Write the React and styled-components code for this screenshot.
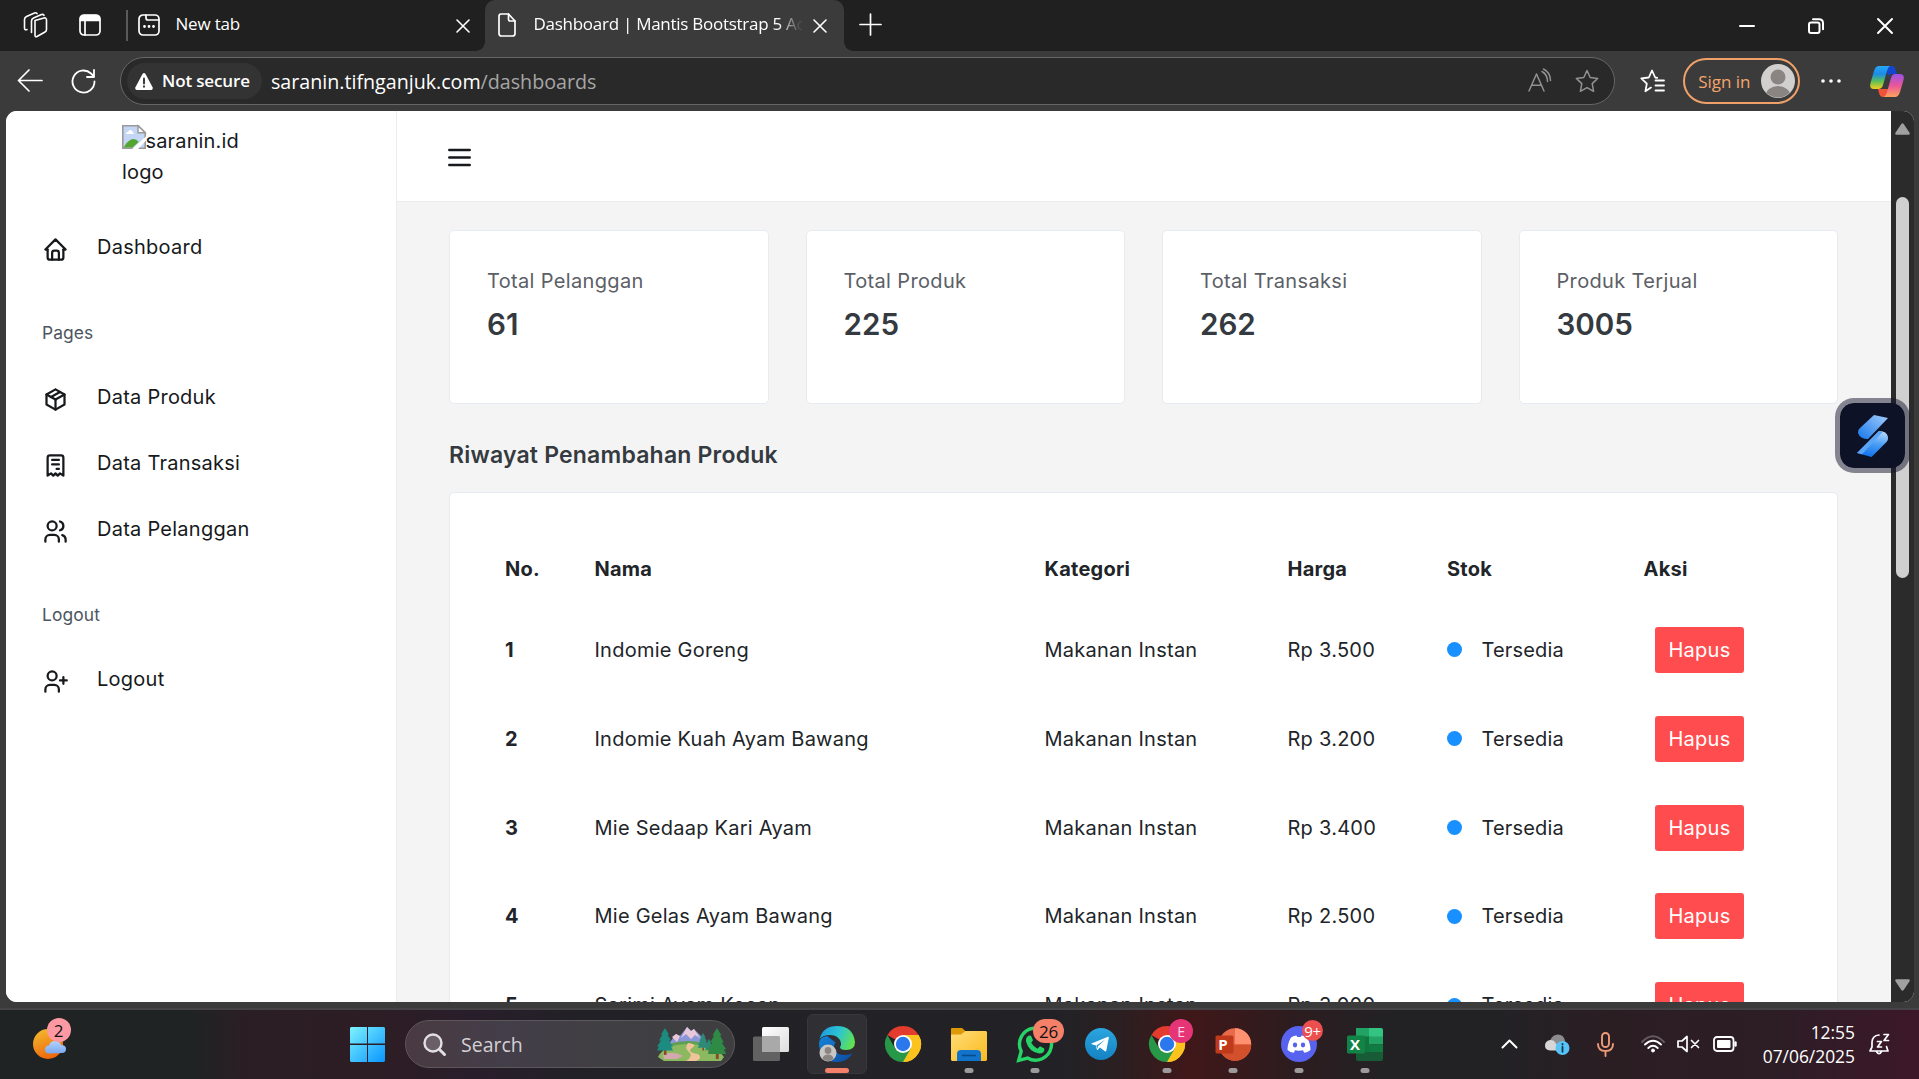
import React from "react";
import styled, { createGlobalStyle, css } from "styled-components";

const GlobalStyle = createGlobalStyle`
  *, *::before, *::after { box-sizing: border-box; }
  html, body { margin: 0; padding: 0; background: #3b3b3b; overflow: hidden; }
  svg { display: block; flex: none; overflow: visible; }
`;

const uiFont = css`
  font-family: "Open Sans", "Noto Sans", sans-serif;
`;

/* ---------- window ---------- */
const Desktop = styled.div`
  width: 1919px;
  height: 1079px;
  display: flex;
  flex-direction: column;
  overflow: hidden;
`;

const TabStrip = styled.header`
  ${uiFont}
  height: 51px;
  flex: none;
  display: flex;
  align-items: center;
  padding-left: 23px;
  background: #202020;
  color: #fff;
  font-size: 17px;
  letter-spacing: -0.2px;
`;

const StripIcon = styled.span`
  display: flex;
  width: ${(p) => p.$w}px;
  margin-right: ${(p) => p.$gap || 0}px;
  padding-bottom: 2px;
`;

const StripDivider = styled.i`
  width: 1.5px;
  height: 31px;
  background: #5a5a5a;
  margin-right: 10px;
`;

const TabLabel = styled.span`
  white-space: nowrap;
  overflow: hidden;
  line-height: 26px;
  padding-bottom: 3px;
  ${(p) => p.$fade && "mask-image: linear-gradient(90deg, #000 244px, rgba(0,0,0,.1) 265px); letter-spacing: -0.27px;"}
  width: ${(p) => p.$w}px;
`;

const InactiveTab = styled.div`
  display: flex;
  align-items: center;
  width: 347px;
`;

const ActiveTab = styled.div`
  position: relative;
  display: flex;
  align-items: center;
  align-self: stretch;
  width: 359px;
  padding-left: 13px;
  background: #3b3b3b;
  border-radius: 10px 10px 0 0;
  margin-right: 16px;
  &::before,
  &::after {
    content: "";
    position: absolute;
    bottom: 0;
    width: 9px;
    height: 9px;
  }
  &::before {
    left: -9px;
    background: radial-gradient(circle at 0 0, transparent 8.5px, #3b3b3b 9px);
  }
  &::after {
    right: -9px;
    background: radial-gradient(circle at 100% 0, transparent 8.5px, #3b3b3b 9px);
  }
`;

const TabClose = styled.span`
  display: flex;
  margin-left: 11px;
`;

const WindowButtons = styled.div`
  display: flex;
  margin-left: auto;
`;

const WindowButton = styled.span`
  width: 69px;
  display: flex;
  justify-content: center;
`;

const AddressRow = styled.div`
  ${uiFont}
  height: 60px;
  flex: none;
  display: flex;
  align-items: center;
  background: #3b3b3b;
  padding: 0 15px 0 17px;
  color: #fff;
`;

const NavIcon = styled.span`
  display: flex;
  margin-right: ${(p) => p.$gap}px;
`;

const AddressBar = styled.div`
  display: flex;
  align-items: center;
  width: 1497px;
  height: 48px;
  border: 1.5px solid #666;
  border-radius: 24px;
  background: #292929;
  padding: 0 15px 0 6px;
  margin-right: 25px;
`;

const SecurityChip = styled.span`
  display: flex;
  align-items: center;
  gap: 9px;
  width: 135px;
  height: 36px;
  padding-left: 8px;
  border-radius: 18px;
  background: #333;
  font-size: 17px;
  font-weight: 600;
  letter-spacing: -0.15px;
  white-space: nowrap;
  span { padding-bottom: 1px; }
`;

const Url = styled.span`
  font-size: 19.7px;
  letter-spacing: -0.02px;
  line-height: 28px;
  margin-left: 9px;
  padding-top: 1px;
  flex: 1;
  em {
    font-style: normal;
    color: #a6a6a6;
  }
`;

const SignIn = styled.span`
  display: flex;
  align-items: center;
  justify-content: space-between;
  width: 117px;
  height: 46px;
  border: 2px solid #f0a069;
  border-radius: 23px;
  color: #f5a56c;
  font-size: 17px;
  padding: 0 3px 0 13px;
  margin: 0 21px 0 18px;
`;

const Viewport = styled.div`
  flex: none;
  height: 899px;
  padding: 0 5px 8px 6px;
  background: #3b3b3b;
  border-bottom: 2px solid #454345;
  display: flex;
`;

const PageFrame = styled.div`
  position: relative;
  display: flex;
  height: 891px;
  flex: 1;
  border-radius: 11px;
  overflow: hidden;
  background: #fff;
`;

const ScrollTrack = styled.div`
  width: 23px;
  background: #2b2b2b;
  display: flex;
  flex-direction: column;
  align-items: center;
  padding: 12px 0 11px 0;
`;

const ScrollThumb = styled.i`
  width: 13.5px;
  height: 381px;
  border-radius: 7px;
  background: #d0d0d0;
  margin: 62px 0 auto;
`;

/* ---------- web page ---------- */
const Page = styled.div`
  flex: 1;
  display: flex;
  font-family: Inter, "Open Sans", sans-serif;
  font-size: 20px;
  letter-spacing: 0.25px;
  line-height: 30px;
  color: #17191c;
`;

const Sidebar = styled.nav`
  width: 391px;
  border-right: 1px solid #ececec;
  background: #fff;
`;

const Brand = styled.div`
  height: 105.5px;
  padding: 14px 0 0 116px;
  line-height: 31px;
  letter-spacing: 0.15px;
  div { display: flex; }
  span { padding-top: 1px; }
  svg { margin-right: -0.5px; }
`;

const SideItem = styled.a`
  display: flex;
  align-items: center;
  height: 66px;
  padding-left: 36px;
  span {
    margin-left: 28px;
    padding-bottom: 5px;
  }
`;

const SideCaption = styled.div`
  height: 84px;
  padding: 35px 0 0 36px;
  font-size: 17.4px;
  letter-spacing: 0.1px;
  color: #4d565f;
`;

const Main = styled.main`
  flex: 1;
  display: flex;
  flex-direction: column;
  background: #f4f4f4;
`;

const TopBar = styled.div`
  height: 91px;
  flex: none;
  display: flex;
  align-items: center;
  padding: 2px 0 0 51px;
  background: #fff;
  border-bottom: 1px solid #ebebeb;
`;

const Content = styled.section`
  padding: 28px 53px 0 52px;
`;

const StatGrid = styled.div`
  display: grid;
  grid-template-columns: repeat(4, 1fr);
  gap: 37px;
`;

const Card = styled.div`
  background: #fff;
  border: 1px solid #e6ebf1;
  border-radius: 5px;
`;

const StatCard = styled(Card)`
  height: 174px;
  padding: 35px 0 0 37px;
`;

const StatLabel = styled.div`
  color: #5b6066;
  letter-spacing: 0.35px;
`;

const StatValue = styled.div`
  font-size: 29.6px;
  line-height: 36px;
  font-weight: 570;
  letter-spacing: 0;
  margin-top: 10px;
  color: #343a40;
`;

const SectionTitle = styled.h5`
  margin: 36px 0 21.5px;
  font-size: 23px;
  line-height: 30px;
  font-weight: 570;
  letter-spacing: 0.2px;
  color: #343a40;
`;

const TableCard = styled(Card)`
  padding: 40px 0 0 55px;
  height: 720px;
`;

const TableRow = styled.div`
  display: grid;
  grid-template-columns: 89.5px 450px 243px 159.5px 196.5px 1fr;
  align-items: center;
  height: ${(p) => (p.$head ? 73 : 88.85)}px;
  color: #212529;
  ${(p) => p.$head && "font-weight: 680; letter-spacing: 0.25px;"}
`;

const RowNumber = styled.b`
  font-weight: 680;
`;

const Stock = styled.span`
  display: flex;
  align-items: center;
  gap: 19.5px;
  letter-spacing: 0.15px;
  &::before {
    content: "";
    width: 15px;
    height: 15px;
    border-radius: 50%;
    background: #1890ff;
  }
`;

const DeleteButton = styled.button`
  width: 89px;
  height: 46px;
  margin-left: 11.5px;
  padding: 0;
  border: 0;
  border-radius: 3px;
  background: #ff4d4f;
  color: #fff;
  font: inherit;
  letter-spacing: 0.3px;
`;

const Widget = styled.div`
  position: absolute;
  left: 1829px;
  top: 287px;
  width: 75px;
  height: 75px;
  border-radius: 19px;
  background: #0e1226;
  background-clip: padding-box;
  border: 5px solid rgba(17, 20, 42, 0.5);
  display: flex;
  align-items: center;
  justify-content: center;
`;

/* ---------- taskbar ---------- */
const Taskbar = styled.footer`
  ${uiFont}
  flex: 1;
  display: flex;
  align-items: center;
  padding: 0 16px 1px 0;
  color: #fff;
  background: linear-gradient(
    90deg,
    #202324 0, #202324 190px, #2b1e24 250px, #2d1d25 390px, #281e2b 470px, #222127 580px,
    #222226 1060px, #2b1f21 1120px, #401719 1190px, #2d1c1f 1290px, #222225 1390px,
    #222225 1500px, #2b1e23 1610px, #2d1d25 1780px, #3d1828 1919px
  );
`;

const WeatherSlot = styled.div`
  position: relative;
  width: 334.5px;
  padding-left: 33px;
`;

const Badge = styled.span`
  position: absolute;
  display: flex;
  align-items: center;
  justify-content: center;
  left: ${(p) => p.$x}px;
  top: ${(p) => p.$y}px;
  width: ${(p) => p.$w}px;
  height: ${(p) => p.$h || p.$w}px;
  border-radius: 12px;
  background: ${(p) => p.$bg};
  color: ${(p) => p.$fg || "#111"};
  font-size: ${(p) => p.$size || 16}px;
  letter-spacing: -0.3px;
`;

const AppSlot = styled.div`
  position: relative;
  width: 66px;
  height: 60px;
  display: flex;
  align-items: center;
  justify-content: center;
  &::after {
    content: "";
    display: ${(p) => (p.$open || p.$active ? "block" : "none")};
    position: absolute;
    left: 50%;
    bottom: 1px;
    width: ${(p) => (p.$active ? 24 : 9)}px;
    height: 5px;
    transform: translateX(-50%);
    border-radius: 3px;
    background: ${(p) => (p.$active ? "#f4806a" : "#9c9a9b")};
  }
`;

const ActiveTile = styled.div`
  width: 60px;
  height: 60px;
  border-radius: 6px;
  border: 1px solid #38383c;
  background: #303034;
  display: flex;
  align-items: center;
  justify-content: center;
`;

const SearchPill = styled.div`
  display: flex;
  align-items: center;
  width: 330px;
  height: 48px;
  margin: 0 3px 0 4.5px;
  padding: 0 9px 0 17px;
  border: 1.5px solid #5c575b;
  border-radius: 24px;
  background: linear-gradient(90deg, #4a3a42, #433e49 30%, #403f43 60%, #3e3e41);
  span {
    flex: 1;
    margin-left: 15px;
    font-size: 19.5px;
    color: #d4d0d3;
  }
`;

const Tray = styled.div`
  display: flex;
  align-items: center;
  margin-left: auto;
`;

const TraySlot = styled.span`
  display: flex;
  justify-content: center;
  width: ${(p) => p.$w || 48}px;
  margin-right: ${(p) => p.$gap || 0}px;
`;

const Clock = styled.div`
  width: 112px;
  text-align: right;
  font-size: 17.4px;
  line-height: 24px;
`;

/* ---------- icons ---------- */
const Line = ({ size = 24, h, box, w = 2, color = "currentColor", children }) => (
  <svg width={size} height={h || size} viewBox={box || `0 0 ${size} ${h || size}`} fill="none" stroke={color} strokeWidth={w} strokeLinecap="round" strokeLinejoin="round">
    {children}
  </svg>
);

const sideIcons = {
  home: ["M5 12H3l9-9 9 9h-2", "M5 12v7a2 2 0 0 0 2 2h10a2 2 0 0 0 2-2v-7", "M9 21v-6a2 2 0 0 1 2-2h2a2 2 0 0 1 2 2v6"],
  box: ["M12 3l8 4.5v9L12 21l-8-4.5v-9L12 3", "M12 12l8-4.5", "M12 12v9", "M12 12L4 7.5", "M16 5.25l-8 4.5"],
  receipt: ["M5 21V5a2 2 0 0 1 2-2h10a2 2 0 0 1 2 2v16l-3-2-2 2-2-2-2 2-2-2-3 2", "M9 7h6", "M9 11h6", "M13 15h2"],
  users: ["M5 7a4 4 0 1 0 8 0a4 4 0 1 0-8 0", "M3 21v-2a4 4 0 0 1 4-4h4a4 4 0 0 1 4 4v2", "M16 3.13a4 4 0 0 1 0 7.75", "M21 21v-2a4 4 0 0 0-3-3.85"],
  userPlus: ["M5 7a4 4 0 1 0 8 0a4 4 0 1 0-8 0", "M3 21v-2a4 4 0 0 1 4-4h4a4 4 0 0 1 4 4v2", "M16 11h6", "M19 8v6"],
};

const SideIcon = ({ name }) => (
  <Line size={27} box="0 0 24 24">
    {sideIcons[name].map((d) => <path key={d} d={d} />)}
  </Line>
);

const Cross = ({ size, w = 1.6 }) => (
  <Line size={size} w={w}><path d={`M1 1L${size - 1} ${size - 1}M${size - 1} 1L1 ${size - 1}`} /></Line>
);

const Workspaces = () => (
  <Line size={26} w={1.6}>
    <path d="M13 8.500L22 6q2.500-.5 2.500 2v9.500q0 1.800-1.500 2.500l-8 4.500q-2 1-2-1.500z" transform="translate(-1 0)" />
    <path d="M8.500 20.500V9q0-2 2-3l8-3.500q1.500-.6 2.500.8" />
    <path d="M4 17.500q-2.500 1-2.500-1.500V7.500q0-2 2-3L11.500 1q1.500-.6 2.500.6" />
  </Line>
);

const VerticalTabs = () => (
  <Line size={22} w={1.7}>
    <rect x="1" y="1" width="20" height="20" rx="4" />
    <path d="M1.500 5a4 4 0 0 1 3.500-3.500h12A4 4 0 0 1 20.500 5v1.500h-19z" fill="#fff" />
    <path d="M6 7v14" />
  </Line>
);

const NewTabIcon = () => (
  <Line size={22} w={1.7}>
    <rect x="1" y="1" width="20" height="20" rx="4" />
    <path d="M8 1v3q0 2 2 2h11" />
    <path d="M6.500 12.500h.01M11 12.500h.01M15.500 12.500h.01" strokeWidth="2.800" />
  </Line>
);

const FileIcon = () => (
  <Line size={18} h={24} w={1.7}>
    <path d="M3 1h7.500L17 8v12.500q0 2.500-2.500 2.500H3.500Q1 23 1 20.500V3.500Q1 1 3 1z" />
    <path d="M10.500 1v5.500q0 1.500 1.500 1.500h5" />
  </Line>
);

const starPath = "M12 1.500l3.200 7 7.500.9-5.500 5.200 1.400 7.700L12 18.600 5.400 22.300l1.400-7.700L1.300 9.400l7.500-.9z";

const Copilot = () => (
  <svg width="34" height="31" viewBox="0 0 34 31">
    <defs>
      <linearGradient id="cpA" x1="0" y1="0" x2="0" y2="1"><stop offset="0" stopColor="#27a8f5" /><stop offset=".35" stopColor="#1a8be8" /><stop offset=".65" stopColor="#57bf5b" /><stop offset="1" stopColor="#f6cf1c" /></linearGradient>
      <linearGradient id="cpB" x1="0" y1="0" x2="0" y2="1"><stop offset="0" stopColor="#9a52e8" /><stop offset=".5" stopColor="#ea5699" /><stop offset="1" stopColor="#fda35c" /></linearGradient>
    </defs>
    <path d="M16 0h6q2.500 0 3.500 3l1.500 5h-5q-3 0-4 3z" fill="#1345cf" />
    <path d="M9 0h11q-2 1-3 5l-4 14q-1 4-5 4H4q-5 0-3.500-6L4 5Q5.500 0 9 0z" fill="url(#cpA)" />
    <path d="M8 23h11l-3 8h-3q-3 0-4-4z" fill="#f0533a" />
    <path d="M25 8h5q5 0 3.500 6L30 26q-1.500 5-5 5H14q2-1 3-5l4-14q1-4 4-4z" fill="url(#cpB)" />
  </svg>
);

const BrokenImage = () => (
  <svg width="24" height="24" viewBox="0 0 24 24">
    <path d="M.8.800h15.500l6.900 6.700v15.700H.8z" fill="#c3d6f5" stroke="#9a9a9a" strokeWidth="1.600" />
    <path d="M4 9q0-2.200 2.200-2.200Q7 4.500 9 5.200q2 .6 1.700 2.300 1.600 0 1.600 1.500z" fill="#fff" />
    <path d="M1.600 22.500q4-7.500 9-8.500 4 0 6 3l-6 5.500z" fill="#55a630" />
    <path d="M10 24L24 11.500v4L16 24z" fill="#fff" />
    <path d="M16 .8v7h7.200z" fill="#fff" stroke="#9a9a9a" strokeWidth="1.400" />
  </svg>
);

const WidgetMark = () => (
  <svg width="32" height="42" viewBox="0 0 32 42">
    <defs>
      <linearGradient id="wmA" x1="1" y1="0" x2="0" y2="1"><stop offset="0" stopColor="#a4cdfb" /><stop offset="1" stopColor="#1677ea" /></linearGradient>
      <linearGradient id="wmB" x1=".7" y1="0" x2=".5" y2="1"><stop offset="0" stopColor="#b7d9fc" /><stop offset=".5" stopColor="#4a9df3" /><stop offset="1" stopColor="#1273ec" /></linearGradient>
    </defs>
    <path d="M17 0l14 3-20 21q-8 0-10-6-.6-3 2-5z" fill="url(#wmA)" />
    <path d="M22 16q8 0 9 6 .5 2.500-1.500 5L14.500 42 0 38z" fill="url(#wmB)" />
    <path d="M22 16l4 .8L5 39.300 0 38z" fill="#5aa5f5" />
  </svg>
);

const Weather = () => (
  <svg width="33" height="30" viewBox="0 0 33 30">
    <defs>
      <linearGradient id="sun" x1=".2" y1="0" x2=".6" y2="1"><stop offset="0" stopColor="#f3b92e" /><stop offset="1" stopColor="#ee640c" /></linearGradient>
      <linearGradient id="cloud" x1="0" y1="0" x2="0" y2="1"><stop offset="0" stopColor="#b4d2fc" /><stop offset="1" stopColor="#78a8f2" /></linearGradient>
    </defs>
    <circle cx="15" cy="15" r="15" fill="url(#sun)" />
    <path d="M16 24.500q-4 0-4-4 0-4 4-4 1-4.500 6-4.500t6 4q5 0 5 4t-4 4z" fill="url(#cloud)" />
  </svg>
);

const StartLogo = () => (
  <svg width="35" height="35" viewBox="0 0 35 35">
    <defs><linearGradient id="win" x1="0" y1="0" x2="35" y2="35" gradientUnits="userSpaceOnUse"><stop offset="0" stopColor="#7df3ff" /><stop offset="1" stopColor="#0a95ff" /></linearGradient></defs>
    <path d="M1 0h16v16.500H0V1zM18 0h16l1 1v15.500H18zM0 18h17v17H1l-1-1zM18 18h17v16l-1 1H18z" fill="url(#win)" />
  </svg>
);

const Pine = ({ x, y, s = 1, c }) => (
  <g transform={`translate(${x} ${y}) scale(${s})`}>
    <path d="M-1 22h2.500v5H-1z" fill="#8a4a2b" />
    <path d="M0 0l4 6.500H2.500L6 12.500H4l4 6H6l2 4H-8l2-4h-2l4-6h-2l3.500-6H-4z" fill={c} />
  </g>
);

const Landscape = () => (
  <svg width="67" height="38" viewBox="0 0 67 38">
    <path d="M10 20l8-11 4 2 7-9 4 4 3-2 10 10 4 6z" fill="#8b96d8" />
    <path d="M29 2l4 4 3-2 6 9-5-3-4 4-5-5-5 4zM14 12l4-3 4 2-3 6z" fill="#e8c8d8" />
    <ellipse cx="30" cy="22" rx="20" ry="6" fill="#5da053" />
    <path d="M0 32q6-13 32-13 26 1 34 13l-3 4H6z" fill="#8cb85f" />
    <path d="M30 18q10 1 4 5t6 6q5 4-2 7H28q8-5 3-9t-1-9z" fill="#f0c49b" />
    <path d="M5 30q8-5 20 1l-6 3H6z" fill="#d4a9ae" />
    <Pine x="7" y="3" c="#1c8b80" />
    <Pine x="45" y="8" s=".65" c="#2c8a76" />
    <Pine x="51" y="14" s=".5" c="#2c8a76" />
    <Pine x="59" y="3" s="1.150" c="#2f8a45" />
  </svg>
);

const TaskView = () => (
  <svg width="36" height="34" viewBox="0 0 36 34">
    <defs><linearGradient id="tv" x1="0" y1="0" x2="1" y2="1"><stop offset="0" stopColor="#fff" /><stop offset="1" stopColor="#dcdcdc" /></linearGradient></defs>
    <rect x="9" y="0" width="27" height="25" rx="1.500" fill="url(#tv)" />
    <rect x="0" y="9.500" width="27" height="24.500" rx="1.500" fill="#626262" />
    <path d="M9 9.500h18V25H9z" fill="#a9a9a9" />
  </svg>
);

const Edge = () => (
  <svg width="36" height="36" viewBox="0 0 36 36">
    <defs>
      <linearGradient id="edA" x1="0" y1=".3" x2="1" y2=".6"><stop offset="0" stopColor="#1e9be0" /><stop offset=".5" stopColor="#2cc5d2" /><stop offset="1" stopColor="#63e34a" /></linearGradient>
      <linearGradient id="edB" x1="0" y1="0" x2="1" y2="1"><stop offset="0" stopColor="#1584d8" /><stop offset="1" stopColor="#0c4aa0" /></linearGradient>
    </defs>
    <path d="M0 18q1 18 18 18 10 0 15.500-8.500-12 4-17-2-3-5 0-9L8 10Q0 11 0 18z" fill="url(#edB)" />
    <path d="M.5 13Q4 0 18 0q16 0 18 16 0 8-9 8-6 0-6-3 1.500-1.500 1-4Q20 9 11 9 4 9 .5 13z" fill="url(#edA)" />
    <circle cx="9" cy="27" r="8.500" fill="#c9c7c5" />
    <circle cx="9" cy="24.500" r="3.400" fill="#8a8583" />
    <path d="M3.500 33q.5-4.500 5.500-4.500t5.500 4.500q-5 4-11 0z" fill="#8a8583" />
  </svg>
);

const Chrome = () => (
  <svg width="36" height="36" viewBox="0 0 36 36">
    <path d="M18 18L2.400 9A18 18 0 0 1 33.600 9z" fill="#e33b2e" />
    <path d="M18 18L33.600 9A18 18 0 0 1 18 36l-3-6z" fill="#fcc31e" />
    <path d="M18 9h15.600A18 18 0 0 1 18 36l7.800-13.500z" fill="#fcc31e" />
    <path d="M2.400 9A18 18 0 0 0 18 36l7.800-13.500L10.200 22.500z" fill="#279847" />
    <circle cx="18" cy="18" r="9" fill="#fff" />
    <circle cx="18" cy="18" r="7.200" fill="#2b78ee" />
  </svg>
);

const Explorer = () => (
  <svg width="36" height="33" viewBox="0 0 36 33">
    <defs><linearGradient id="fo" x1="0" y1="0" x2="1" y2="1"><stop offset="0" stopColor="#ffdc78" /><stop offset="1" stopColor="#fbbb1e" /></linearGradient></defs>
    <path d="M0 1q0-1 1-1h10l4 3.500v7H0z" fill="#dd9a06" />
    <path d="M0 6.500h10L14.500 3H35l1 1v28l-1 1H1l-1-1z" fill="url(#fo)" />
    <path d="M6 33v-7q0-4 4-4h16q4 0 4 4v7z" fill="#1173c9" />
    <path d="M11 27.500h14" stroke="#0a4a8b" strokeWidth="1.600" />
  </svg>
);

const WhatsApp = () => (
  <svg width="36" height="36" viewBox="0 0 36 36">
    <path d="M1.700 34.300l2.500-9A16 16 0 1 1 10.500 32z" fill="none" stroke="#27d366" strokeWidth="3.400" />
    <path d="M12 9.500l2 .2 2 4.500-1.800 2.500q2.300 4 6.300 6l2.500-2.500 4.300 2.200q.5 5-5 5.200Q12 26 9 15.500q-.5-4.500 3-6z" fill="#27d366" />
  </svg>
);

const Telegram = () => (
  <svg width="32" height="32" viewBox="0 0 32 32">
    <defs><linearGradient id="tg" x1="0" y1="0" x2="0" y2="1"><stop offset="0" stopColor="#2ba5e0" /><stop offset="1" stopColor="#1482c2" /></linearGradient></defs>
    <circle cx="16" cy="16" r="16" fill="url(#tg)" />
    <path d="M6.500 15.500L23 8.800q1-.2.8 1l-2.500 13q-.4 1-1.400.5l-5-3.700-2.300 2.300q-.6.400-.7-.2l-.9-4.200-4-1.200q-1.200-.4-.5-.8zM11.500 17.500l1 3.500.4-2.800 7.200-6.500z" fill="#fff" fillRule="evenodd" />
  </svg>
);

const OfficeLetter = styled.span`
  position: absolute;
  left: 14px;
  top: 21px;
  width: 18px;
  height: 18px;
  line-height: 18px;
  text-align: center;
  font-weight: 700;
  font-size: 15px;
  color: #fff;
`;

const PowerPoint = () => (
  <svg width="35" height="33" viewBox="0 0 35 33">
    <circle cx="19" cy="16.500" r="16.200" fill="#e86a48" />
    <path d="M19 .3a16.200 16.200 0 0 1 16.200 16.200H19z" fill="#ff9070" />
    <path d="M2.800 16.500h32.400a16.200 16.200 0 0 1-32.400 0z" fill="#d2502c" />
    <rect x="-.5" y="7.500" width="18" height="18" rx="1.500" fill="#c0391a" />
  </svg>
);

const Excel = () => (
  <svg width="36" height="33" viewBox="0 0 36 33">
    <path d="M9 0h14v9H9z" fill="#21a366" />
    <path d="M22 0h12q2 0 2 2v7H22z" fill="#33c481" />
    <path d="M9 8.500h14V24H9z" fill="#12753f" />
    <path d="M22 8.500h14v8H22z" fill="#21a366" />
    <path d="M22 16.500h14V25H22z" fill="#107c41" />
    <path d="M9 24h27v7q0 2-2 2H11q-2 0-2-2z" fill="#185c37" />
    <rect x="0" y="7.500" width="18" height="18" rx="1.500" fill="#128346" />
  </svg>
);

const Discord = () => (
  <svg width="36" height="36" viewBox="0 0 36 36">
    <circle cx="18" cy="18" r="18" fill="#5762ee" />
    <path d="M10 11.500q3-2 5.500-2l.7 1.400h3.600l.7-1.400q2.500 0 5.500 2 3.500 6 3.500 12.500-3 2.500-6.200 2.700l-1.400-2.200 1-.6q-5 1.600-9.800 0l1 .6-1.400 2.200Q9.500 26.500 6.500 24q0-6.500 3.500-12.500z" fill="#fff" />
    <ellipse cx="14" cy="19" rx="2.200" ry="2.400" fill="#5762ee" />
    <ellipse cx="22" cy="19" rx="2.200" ry="2.400" fill="#5762ee" />
  </svg>
);

/* ---------- data ---------- */
const stats = [
  ["Total Pelanggan", "61"],
  ["Total Produk", "225"],
  ["Total Transaksi", "262"],
  ["Produk Terjual", "3005"],
];

const products = [
  ["Indomie Goreng", "Rp 3.500"],
  ["Indomie Kuah Ayam Bawang", "Rp 3.200"],
  ["Mie Sedaap Kari Ayam", "Rp 3.400"],
  ["Mie Gelas Ayam Bawang", "Rp 2.500"],
  ["Sarimi Ayam Kecap", "Rp 3.000"],
];

const SideLink = ({ icon, children }) => (
  <SideItem><SideIcon name={icon} /><span>{children}</span></SideItem>
);

export default function App() {
  return (
    <Desktop>
      <GlobalStyle />
      <TabStrip>
        <StripIcon $w={26} $gap={30}><Workspaces /></StripIcon>
        <StripIcon $w={22} $gap={25}><VerticalTabs /></StripIcon>
        <StripDivider />
        <InactiveTab>
          <StripIcon $w={22} $gap={16}><NewTabIcon /></StripIcon>
          <TabLabel $w={280}>New tab</TabLabel>
          <Cross size={14} />
        </InactiveTab>
        <ActiveTab>
          <StripIcon $w={18} $gap={18}><FileIcon /></StripIcon>
          <TabLabel $w={268} $fade>Dashboard | Mantis Bootstrap 5 Admin</TabLabel>
          <TabClose><Cross size={14} /></TabClose>
        </ActiveTab>
        <StripIcon $w={21}><Line size={21} w={1.7}><path d="M10.500 0v21M0 10.500h21" /></Line></StripIcon>
        <WindowButtons>
          <WindowButton><Line size={16} w={2}><path d="M1 8h14" /></Line></WindowButton>
          <WindowButton>
            <Line size={16} w={2}>
              <rect x="1" y="4.500" width="10.500" height="10.500" rx="2" />
              <path d="M5 1.200h6q4 0 4 4v6" />
            </Line>
          </WindowButton>
          <WindowButton><Cross size={16} w={2} /></WindowButton>
        </WindowButtons>
      </TabStrip>

      <AddressRow>
        <NavIcon $gap={28}><Line size={26} w={1.7}><path d="M1.500 12.500H25M12 2L1.500 12.500 12 23" /></Line></NavIcon>
        <NavIcon $gap={24}><Line size={25} w={1.8}><path d="M23.500 12.500A11 11 0 1 1 20 4.500l3 3M23 1v7h-7" /></Line></NavIcon>
        <AddressBar>
          <SecurityChip>
            <svg width="18" height="17" viewBox="0 0 18 17">
              <path d="M7.500 1q1.500-1.800 3 0L17.700 14.500q.6 2-1.400 2.500H1.700Q-.3 16.500.3 14.500z" fill="#fff" />
              <path d="M9 5.500v5M9 13.200v.6" stroke="#333" strokeWidth="1.900" strokeLinecap="round" />
            </svg>
            <span>Not secure</span>
          </SecurityChip>
          <Url>saranin.tifnganjuk.com<em>/dashboards</em></Url>
          <NavIcon $gap={24}>
            <Line size={23} w={1.5} color="#929292"><path d="M1 21L8.500 4 16 21M3.800 15.200h9.400M14 1.500q5.500 3 5.500 10M15.500-1Q22.500 2.500 22.500 10.500" /></Line>
          </NavIcon>
          <Line size={24} w={1.5} color="#929292"><path d={starPath} /></Line>
        </AddressBar>
        <Line size={25} h={24} w={1.8}>
          <path d="M11 18.600L5.400 22.300l1.400-7.700L1.300 9.400l7.500-.9 3.200-7 3.200 7 2 .4M15.500 11.500H24M15.500 16.500H24M15.500 21.500H24" />
        </Line>
        <SignIn>
          Sign in
          <svg width="34" height="34" viewBox="0 0 34 34">
            <defs><clipPath id="av"><circle cx="17" cy="17" r="16.500" /></clipPath></defs>
            <circle cx="17" cy="17" r="17" fill="#d2d0ce" />
            <g clipPath="url(#av)" fill="#8a8583"><circle cx="17" cy="13" r="7.500" /><ellipse cx="17" cy="32" rx="12.500" ry="10" /></g>
          </svg>
        </SignIn>
        <NavIcon $gap={29}><svg width="20" height="4"><circle cx="2" cy="2" r="1.800" fill="#fff" /><circle cx="10" cy="2" r="1.800" fill="#fff" /><circle cx="18" cy="2" r="1.800" fill="#fff" /></svg></NavIcon>
        <Copilot />
      </AddressRow>

      <Viewport>
        <PageFrame>
          <Page>
            <Sidebar>
              <Brand>
                <div><BrokenImage /><span>saranin.id</span></div>
                <div>logo</div>
              </Brand>
              <SideLink icon="home">Dashboard</SideLink>
              <SideCaption>Pages</SideCaption>
              <SideLink icon="box">Data Produk</SideLink>
              <SideLink icon="receipt">Data Transaksi</SideLink>
              <SideLink icon="users">Data Pelanggan</SideLink>
              <SideCaption>Logout</SideCaption>
              <SideLink icon="userPlus">Logout</SideLink>
            </Sidebar>
            <Main>
              <TopBar>
                <Line size={23} h={19} w={2.5}><path d="M1.300 2h20.400M1.300 9.500h20.400M1.300 17h20.400" /></Line>
              </TopBar>
              <Content>
                <StatGrid>
                  {stats.map(([label, value]) => (
                    <StatCard key={label}>
                      <StatLabel>{label}</StatLabel>
                      <StatValue>{value}</StatValue>
                    </StatCard>
                  ))}
                </StatGrid>
                <SectionTitle>Riwayat Penambahan Produk</SectionTitle>
                <TableCard>
                  <TableRow $head>
                    <span>No.</span><span>Nama</span><span>Kategori</span><span>Harga</span><span>Stok</span><span>Aksi</span>
                  </TableRow>
                  {products.map(([name, price], i) => (
                    <TableRow key={name}>
                      <RowNumber>{i + 1}</RowNumber>
                      <span>{name}</span>
                      <span>Makanan Instan</span>
                      <span>{price}</span>
                      <Stock>Tersedia</Stock>
                      <span><DeleteButton>Hapus</DeleteButton></span>
                    </TableRow>
                  ))}
                </TableCard>
              </Content>
            </Main>
          </Page>
          <ScrollTrack>
            <svg width="15" height="12"><path d="M6.300 1q1.200-1.500 2.400 0L14.700 10q.5 1.700-1 1.700H1.300q-1.500 0-1-1.700z" fill="#a0a0a0" /></svg>
            <ScrollThumb />
            <svg width="15" height="12"><path d="M6.300 11q1.200 1.500 2.400 0L14.700 2q.5-1.700-1-1.700H1.300q-1.500 0-1 1.700z" fill="#a0a0a0" /></svg>
          </ScrollTrack>
          <Widget><WidgetMark /></Widget>
        </PageFrame>
      </Viewport>

      <Taskbar>
        <WeatherSlot>
          <Weather />
          <Badge $x={46.5} $y={-11} $w={24} $bg="#fd99a2" $size={17}>2</Badge>
        </WeatherSlot>
        <AppSlot><StartLogo /></AppSlot>
        <SearchPill>
          <Line size={23} w={2.4} color="#e2e0e2"><circle cx="10" cy="10" r="8.500" fill="#6a5f68" /><path d="M16.500 16.500l5 5" strokeWidth="3" /></Line>
          <span>Search</span>
          <Landscape />
        </SearchPill>
        <AppSlot><TaskView /></AppSlot>
        <AppSlot $active><ActiveTile><Edge /></ActiveTile></AppSlot>
        <AppSlot><Chrome /></AppSlot>
        <AppSlot $open><Explorer /></AppSlot>
        <AppSlot $open><WhatsApp /><Badge $x={31} $y={5} $w={31} $h={24} $bg="#f4806a" $size={17}>26</Badge></AppSlot>
        <AppSlot><Telegram /></AppSlot>
        <AppSlot $open><Chrome /><Badge $x={35} $y={5} $w={24} $bg="#e63577" $fg="#ffd9e6" $size={14}>E</Badge></AppSlot>
        <AppSlot $open><PowerPoint /><OfficeLetter>P</OfficeLetter></AppSlot>
        <AppSlot $open><Discord /><Badge $x={36} $y={6} $w={21} $bg="#ec4f50" $fg="#fff" $size={15}>9+</Badge></AppSlot>
        <AppSlot $open><Excel /><OfficeLetter>X</OfficeLetter></AppSlot>
        <Tray>
          <TraySlot><Line size={17} h={10} w={2}><path d="M1.500 8.500l7-7 7 7" /></Line></TraySlot>
          <TraySlot>
            <svg width="25" height="21" viewBox="0 0 25 21">
              <path d="M5 6.500Q7.500.5 13 .5t7 6v8H7z" fill="#8c8c8c" />
              <path d="M5 16.500q-5-.5-5-5t5-5.500q5 0 6 4 4 0 4 6.500z" fill="#d6d6d6" />
              <circle cx="17.500" cy="14" r="7" fill="#57c3f7" />
              <path d="M17.500 12.800v5M17.500 10v.5" stroke="#12384d" strokeWidth="1.800" strokeLinecap="round" />
            </svg>
          </TraySlot>
          <TraySlot $gap={6}><Line size={17} h={25} w={1.9} color="#ec9a78"><rect x="5" y="1" width="7" height="14" rx="3.500" /><path d="M1 12q0 7 7.500 7t7.500-7M8.500 19v5" /></Line></TraySlot>
          <TraySlot $w={36}>
            <Line size={24} h={18} w={1.9}>
              <path d="M1 7Q12-4.500 23 7" stroke="#655a60" />
              <path d="M4 9.500q8-7.500 16 0M7.300 13q4.700-4.300 9.400 0" />
              <circle cx="12" cy="15.500" r="1.500" fill="#fff" strokeWidth="1" />
            </Line>
          </TraySlot>
          <TraySlot $w={35}>
            <Line size={23} h={18} w={1.7}><path d="M1 6h4l5-4.500v15L5 12H1zM14.500 5.500l7 7M21.500 5.500l-7 7" /></Line>
          </TraySlot>
          <TraySlot $w={37}>
            <Line size={24} h={16} w={1.8}>
              <rect x="1" y="1" width="19.500" height="14" rx="3" />
              <rect x="4" y="4" width="13.500" height="8" rx="1" fill="#fff" stroke="none" />
              <path d="M22.500 6.500v3" strokeWidth="2.400" />
            </Line>
          </TraySlot>
          <Clock>12:55<br />07/06/2025</Clock>
          <TraySlot>
            <Line size={21} h={22} w={1.7}>
              <path d="M10 2Q3.500 2.500 3 9v5L1 18h18l-1.500-4.500M7.500 18.500q2.500 4.500 5 0M8.500 8.500h4l-4 5.500h4M15 1.500h4.500l-4.500 6h4.500" />
            </Line>
          </TraySlot>
        </Tray>
      </Taskbar>
    </Desktop>
  );
}
